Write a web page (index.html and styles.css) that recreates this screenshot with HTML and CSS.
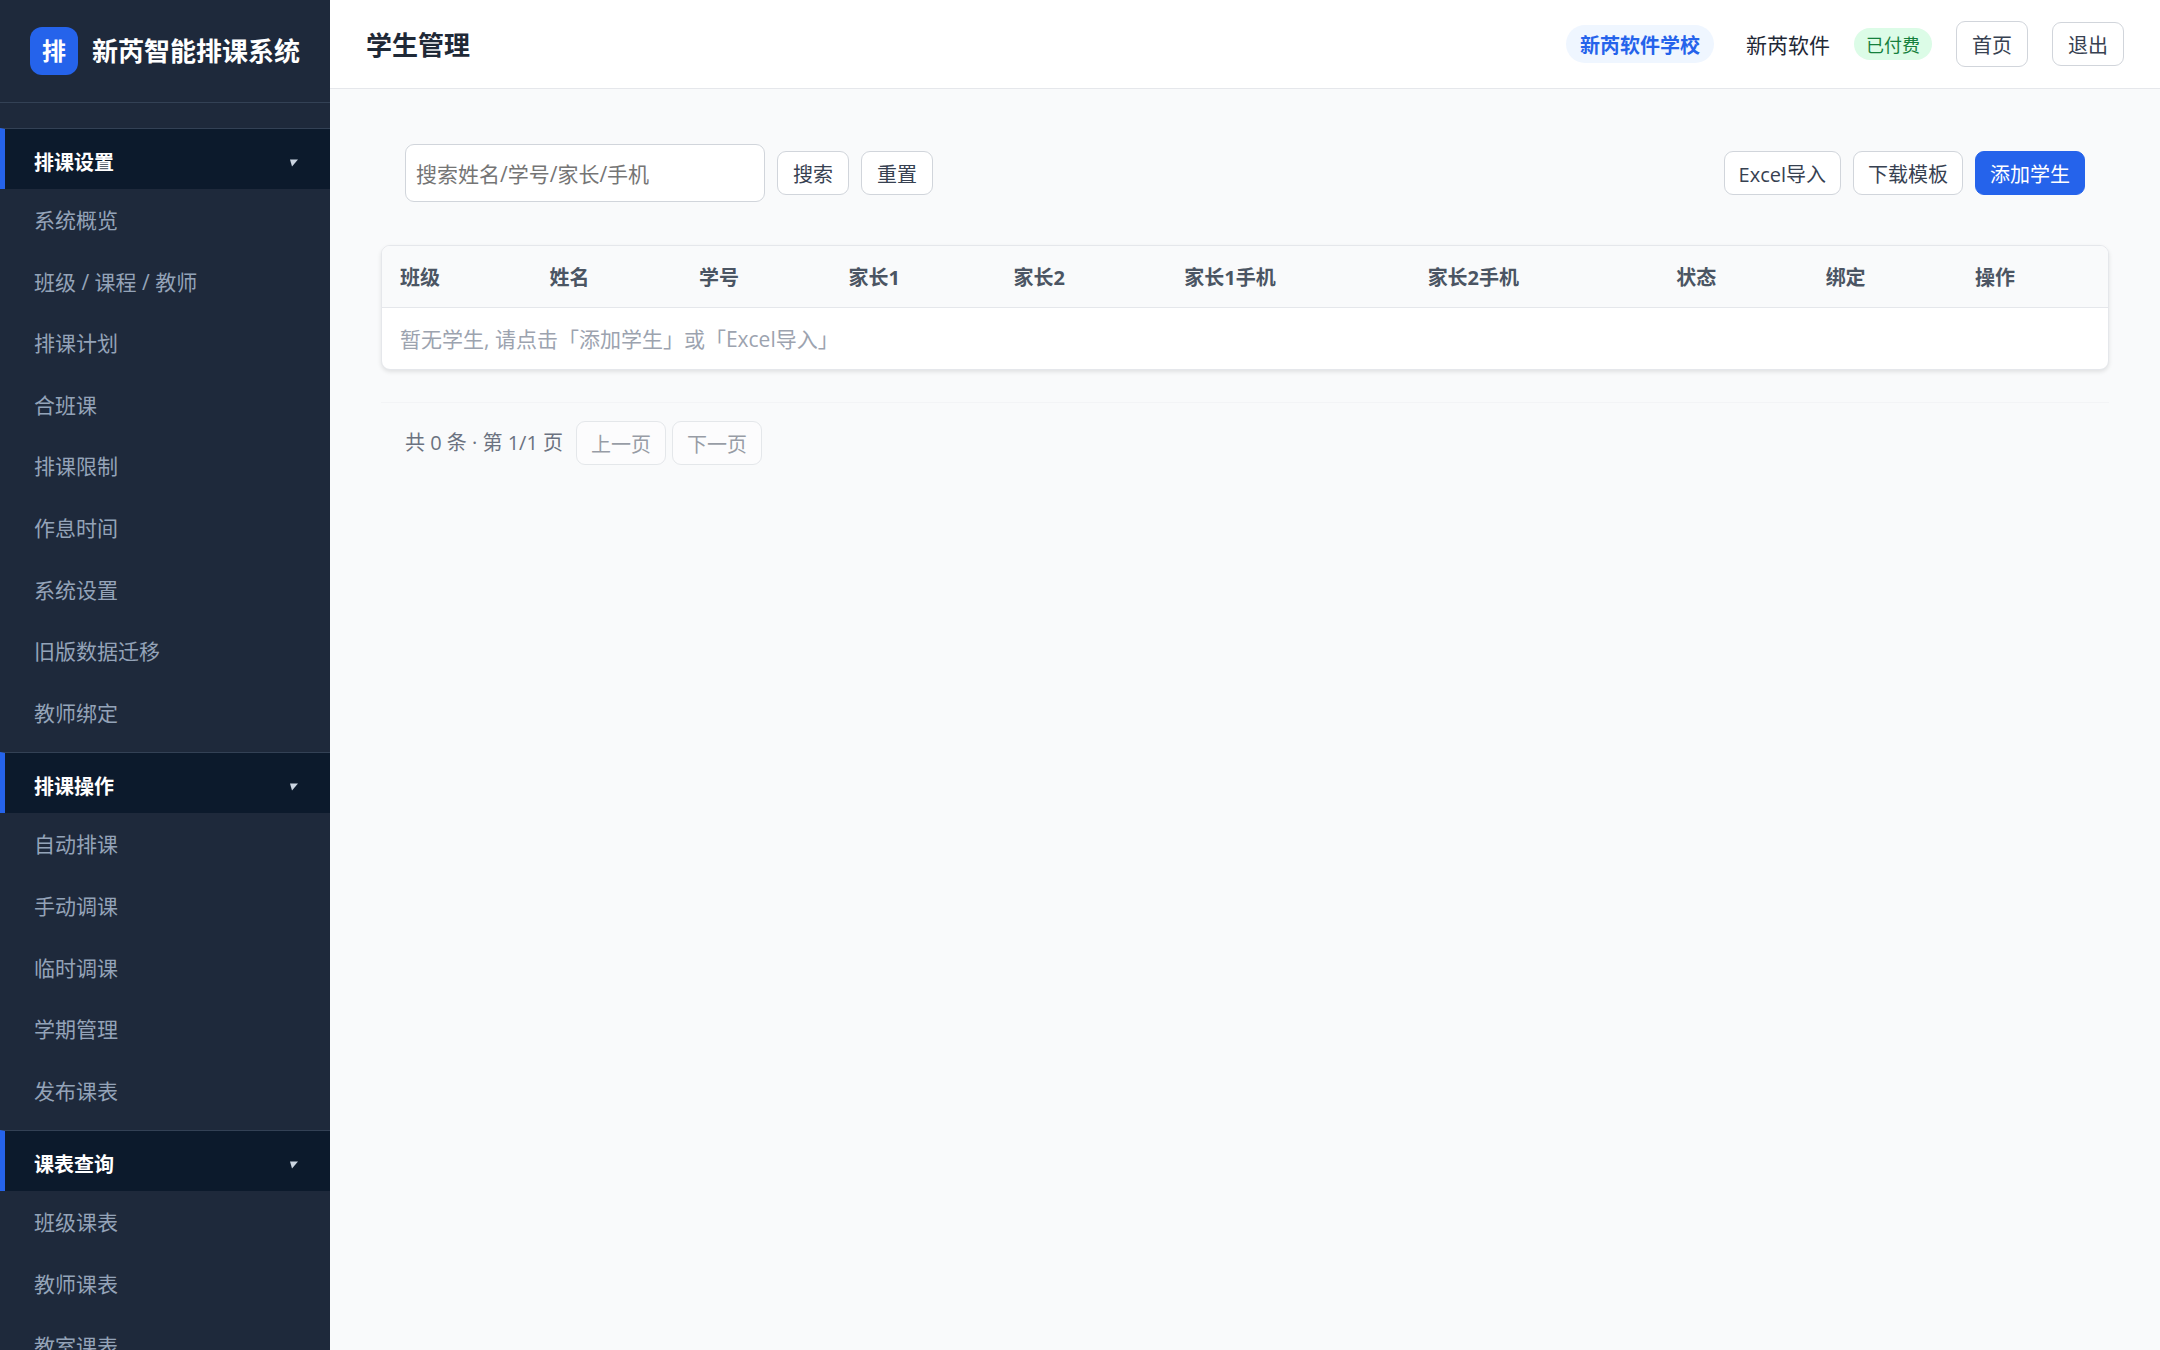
FILE: index.html
```html
<!DOCTYPE html>
<html lang="zh-CN">
<head>
    <meta charset="UTF-8">
    <meta name="viewport" content="width=device-width, initial-scale=1.0">
    <title>学生管理</title>
    <link rel="stylesheet" href="styles.css">
</head>
<body>
    <div class="layout">
        <!-- Sidebar -->
        <aside class="sidebar">
            <div class="brand">
                <span class="brand-logo">排</span>
                <span class="brand-name">新芮智能排课系统</span>
            </div>
            <nav class="menu">
                <div class="menu-group">
                    <button type="button" class="menu-title" aria-expanded="true">
                        <span>排课设置</span>
                        <svg class="arrow" viewBox="0 0 8 8" aria-hidden="true"><path d="M0 0.5H8L2 7.5Z"/></svg>
                    </button>
                    <a href="#">系统概览</a>
                    <a href="#">班级 / 课程 / 教师</a>
                    <a href="#">排课计划</a>
                    <a href="#">合班课</a>
                    <a href="#">排课限制</a>
                    <a href="#">作息时间</a>
                    <a href="#">系统设置</a>
                    <a href="#">旧版数据迁移</a>
                    <a href="#">教师绑定</a>
                </div>
                <div class="menu-group">
                    <button type="button" class="menu-title" aria-expanded="true">
                        <span>排课操作</span>
                        <svg class="arrow" viewBox="0 0 8 8" aria-hidden="true"><path d="M0 0.5H8L2 7.5Z"/></svg>
                    </button>
                    <a href="#">自动排课</a>
                    <a href="#">手动调课</a>
                    <a href="#">临时调课</a>
                    <a href="#">学期管理</a>
                    <a href="#">发布课表</a>
                </div>
                <div class="menu-group">
                    <button type="button" class="menu-title" aria-expanded="true">
                        <span>课表查询</span>
                        <svg class="arrow" viewBox="0 0 8 8" aria-hidden="true"><path d="M0 0.5H8L2 7.5Z"/></svg>
                    </button>
                    <a href="#">班级课表</a>
                    <a href="#">教师课表</a>
                    <a href="#">教室课表</a>
                </div>
            </nav>
        </aside>

        <div class="main">
            <!-- Top bar -->
            <header class="topbar">
                <h1>学生管理</h1>
                <div class="topbar-right">
                    <span class="school">新芮软件学校</span>
                    <span class="user">新芮软件</span>
                    <span class="badge">已付费</span>
                    <a href="#" class="btn btn-home">首页</a>
                    <button type="button" class="btn">退出</button>
                </div>
            </header>

            <main class="content">
                <!-- Search and actions -->
                <div class="toolbar">
                    <form class="search">
                        <input type="text" id="keyword" aria-label="搜索学生" placeholder="搜索姓名/学号/家长/手机">
                        <button type="button" class="btn">搜索</button>
                        <button type="reset" class="btn">重置</button>
                    </form>
                    <div class="actions">
                        <button type="button" class="btn">Excel导入</button>
                        <button type="button" class="btn">下载模板</button>
                        <button type="button" class="btn btn-primary">添加学生</button>
                    </div>
                </div>

                <!-- Student list -->
                <div class="card">
                    <table>
                        <colgroup>
                            <col class="col-sm" span="3">
                            <col class="col-parent1">
                            <col class="col-parent2">
                            <col class="col-phone1">
                            <col class="col-phone2">
                            <col class="col-sm" span="2">
                            <col>
                        </colgroup>
                        <thead>
                            <tr>
                                <th>班级</th>
                                <th>姓名</th>
                                <th>学号</th>
                                <th>家长1</th>
                                <th>家长2</th>
                                <th>家长1手机</th>
                                <th>家长2手机</th>
                                <th>状态</th>
                                <th>绑定</th>
                                <th>操作</th>
                            </tr>
                        </thead>
                        <tbody>
                            <tr>
                                <td colspan="10">暂无学生, 请点击「添加学生」或「Excel导入」</td>
                            </tr>
                        </tbody>
                    </table>
                </div>

                <!-- Pagination -->
                <div class="pager">
                    <span class="pager-info">共 0 条 · 第 1/1 页</span>
                    <button type="button" class="btn" disabled>上一页</button>
                    <button type="button" class="btn" disabled>下一页</button>
                </div>
            </main>
        </div>
    </div>
</body>
</html>
```

FILE: styles.css
```css
/* General */
* {
    box-sizing: border-box;
}
body {
    margin: 0;
    font-family: "Open Sans", "Noto Sans CJK SC", sans-serif;
    font-size: 21px;
    line-height: 1.6;
    color: #1f2937;
    background-color: #f9fafb;
}
a {
    text-decoration: none;
}
button, input {
    font-family: inherit;
}
.layout {
    display: flex;
    height: 100vh;
}

/* Sidebar */
.sidebar {
    flex: 0 0 330px;
    background-color: #1e293b;
    overflow: hidden;
}
.brand {
    display: flex;
    align-items: center;
    gap: 14px;
    padding: 27px 28px 27px 30px;
    border-bottom: 1px solid #334155;
    color: #fff;
    font-weight: 700;
    white-space: nowrap;
}
.brand-logo {
    display: flex;
    align-items: center;
    justify-content: center;
    width: 48px;
    height: 48px;
    border-radius: 12px;
    background-color: #2563eb;
    font-size: 24px;
}
.brand-name {
    font-size: 26px;
    line-height: 40px;
}
.menu {
    padding-top: 25px;
}
.menu-group {
    margin-bottom: 9px;
}
.menu-title {
    display: flex;
    align-items: center;
    justify-content: space-between;
    width: 100%;
    padding: 18px 32px 10px 29px;
    border: 0;
    border-top: 1px solid #334155;
    border-left: 5px solid #2563eb;
    background-color: #0c1a2c;
    color: #fff;
    font-size: 20px;
    font-weight: 700;
    line-height: 32px;
    cursor: pointer;
}
.arrow {
    width: 8px;
    height: 8px;
    fill: #cbd5e1;
}
.menu-group a {
    display: block;
    padding: 15px 34px 13px;
    color: #94a3b8;
}

/* Top bar */
.main {
    flex: 1;
    min-width: 0;
}
.topbar {
    display: flex;
    align-items: center;
    justify-content: space-between;
    padding: 21px 36px;
    border-bottom: 1px solid #e5e7eb;
    background-color: #fff;
}
.topbar h1 {
    margin: 0;
    padding-top: 2px;
    font-size: 26px;
    line-height: 40px;
}
.topbar-right {
    display: flex;
    align-items: center;
    gap: 24px;
}
.user {
    padding-top: 3px;
}
.school {
    margin-right: 8px;
    padding: 5px 14px 1px;
    border-radius: 20px;
    background-color: #eff6ff;
    color: #2563eb;
    font-size: 20px;
    font-weight: 700;
    line-height: 32px;
}
.badge {
    padding: 3px 12px 1px;
    border-radius: 18px;
    background-color: #dcfce7;
    color: #15803d;
    font-size: 18px;
    line-height: 28px;
}

/* Buttons */
.btn {
    padding: 8px 15px 4px;
    border: 1px solid #d1d5db;
    border-radius: 9px;
    background-color: #fff;
    color: #374151;
    font-size: 20px;
    line-height: 30px;
    cursor: pointer;
}
.btn-home {
    line-height: 32px;
}
.btn-primary {
    border-color: #2563eb;
    background-color: #2563eb;
    color: #fff;
}
.btn:disabled {
    opacity: 0.5;
    cursor: not-allowed;
}
.actions .btn, .pager .btn {
    padding-left: 14px;
    padding-right: 14px;
}

/* Content */
.content {
    padding: 39px 51px;
}
.toolbar {
    display: flex;
    align-items: center;
    justify-content: space-between;
    padding: 16px 24px;
    margin-bottom: 27px;
}
.search, .actions {
    display: flex;
    align-items: center;
    gap: 12px;
}
.search input {
    width: 360px;
    height: 58px;
    padding: 2px 10px 0;
    border: 1px solid #d1d5db;
    border-radius: 9px;
    background-color: #fff;
    font-size: 21px;
}
.search input::placeholder {
    color: #757575;
}

/* Student table */
.card {
    border: 1px solid #e5e7eb;
    border-radius: 9px;
    background-color: #fff;
    box-shadow: 0 2px 4px rgba(0, 0, 0, 0.1);
    overflow: hidden;
}
table {
    width: 100%;
    border-collapse: collapse;
    table-layout: fixed;
}
th, td {
    padding: 15px 18px 13px;
    text-align: left;
    line-height: 33px;
}
th {
    border-bottom: 1px solid #e5e7eb;
    background-color: #f9fafb;
    color: #4b5563;
    font-size: 20px;
}
td {
    color: #9ca3af;
}
.col-sm {
    width: 8.66%;
}
.col-parent1 {
    width: 9.56%;
}
.col-parent2 {
    width: 9.9%;
}
.col-phone1 {
    width: 14.1%;
}
.col-phone2 {
    width: 14.4%;
}

/* Pagination */
.pager {
    display: flex;
    align-items: center;
    gap: 6px;
    margin-top: 32px;
    padding: 18px 24px;
    border-top: 1px solid #f3f4f6;
}
.pager-info {
    margin-right: 7px;
    color: #6b7280;
    font-size: 20px;
}
```
